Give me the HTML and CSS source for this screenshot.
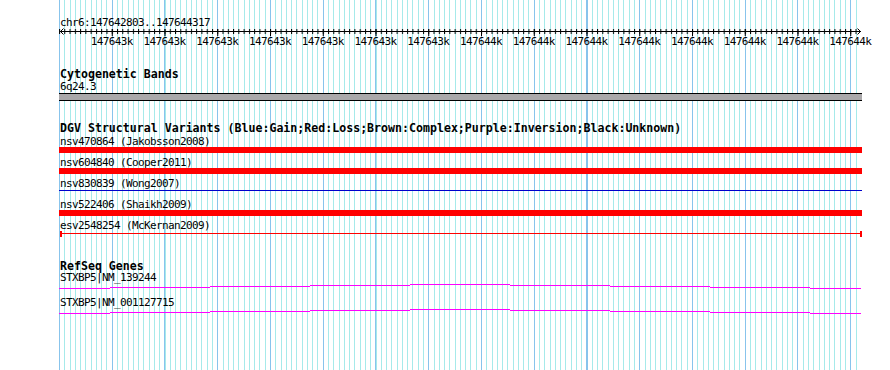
FILE: index.html
```html
<!DOCTYPE html>
<html lang="en">
<head>
    <meta charset="UTF-8">
    <title>chr6:147642803..147644317</title>
    <link rel="stylesheet" href="styles.css">
</head>
<body>
    <div class="panel">
        <div class="label locus">chr6:147642803..147644317</div>
        <svg class="ruler" width="803" height="8">
            <defs>
                <pattern id="minor-tick" width="5.275" height="8" patternUnits="userSpaceOnUse">
                    <rect x="0" y="1" width="1" height="5" fill="#000"/>
                </pattern>
                <pattern id="major-tick" width="52.75" height="8" patternUnits="userSpaceOnUse">
                    <rect x="0" y="1" width="1" height="7" fill="#000"/>
                </pattern>
            </defs>
            <rect x="0" y="0" width="799" height="8" fill="url(#minor-tick)"/>
            <rect x="52" y="0" width="747" height="8" fill="url(#major-tick)"/>
            <path d="M1 3.5H802 M4.5 0.5L1.5 3.5L4.5 6.5 M798.5 0.5L801.5 3.5L798.5 6.5" stroke="#000" fill="none"/>
        </svg>
        <div class="ticks">
            <span>147643k</span><span>147643k</span><span>147643k</span><span>147643k</span>
            <span>147643k</span><span>147643k</span><span>147643k</span><span>147644k</span>
            <span>147644k</span><span>147644k</span><span>147644k</span><span>147644k</span>
            <span>147644k</span><span>147644k</span><span>147644k</span>
        </div>

        <div class="track cyto">
            <div class="track-title">Cytogenetic Bands</div>
            <div class="label band-name">6q24.3</div>
            <div class="band"></div>
        </div>

        <div class="track dgv">
            <div class="track-title">DGV Structural Variants (Blue:Gain;Red:Loss;Brown:Complex;Purple:Inversion;Black:Unknown)</div>
            <div class="features">
                <div class="feature">
                    <div class="label">nsv470864 (Jakobsson2008)</div>
                    <div class="bar loss"></div>
                </div>
                <div class="feature">
                    <div class="label">nsv604840 (Cooper2011)</div>
                    <div class="bar loss"></div>
                </div>
                <div class="feature">
                    <div class="label">nsv830839 (Wong2007)</div>
                    <div class="thin gain"></div>
                </div>
                <div class="feature">
                    <div class="label">nsv522406 (Shaikh2009)</div>
                    <div class="bar loss"></div>
                </div>
                <div class="feature">
                    <div class="label">esv2548254 (McKernan2009)</div>
                    <div class="capped"></div>
                </div>
            </div>
        </div>

        <div class="track refseq">
            <div class="track-title">RefSeq Genes</div>
            <div class="gene">
                <div class="label">STXBP5|NM_139244</div>
                <svg class="hat" width="803" height="7">
                    <path d="M0 5.5H51 M51 4.5H151 M151 3.5H251 M251 2.5H351 M351 1.5H451 M451 2.5H551 M551 3.5H651 M651 4.5H751 M751 5.5H802"/>
                </svg>
            </div>
            <div class="gene">
                <div class="label">STXBP5|NM_001127715</div>
                <svg class="hat" width="803" height="7">
                    <path d="M0 5.5H51 M51 4.5H151 M151 3.5H251 M251 2.5H351 M351 1.5H451 M451 2.5H551 M551 3.5H651 M651 4.5H751 M751 5.5H802"/>
                </svg>
            </div>
        </div>
    </div>
</body>
</html>
```

FILE: styles.css
```css
body {
    margin: 0;
    background: #fff;
    color: #000;
    font-family: "DejaVu Sans Mono", monospace;
    overflow: hidden;
}
.panel {
    box-sizing: border-box;
    margin-left: 59px;
    width: 803px;
    height: 370px;
    padding-top: 17px;
    background-image:
        repeating-linear-gradient(to right, #88c4ec 0 1px, transparent 1px 52.75px),
        repeating-linear-gradient(to right, #a6eaea 0 1px, transparent 1px 5.275px);
    background-size: 799px 100%;
    background-repeat: no-repeat;
}
.label {
    height: 11px;
    padding-left: 1px;
    font-size: 11px;
    line-height: 11px;
    letter-spacing: -0.62px;
    white-space: nowrap;
}
.ruler {
    display: block;
}
.ticks {
    display: flex;
    height: 11px;
    margin-left: 26.375px;
    font-size: 11px;
    line-height: 11px;
    letter-spacing: -0.62px;
    white-space: nowrap;
}
.ticks span {
    flex: 0 0 52.75px;
    text-align: center;
}
.track-title {
    height: 12px;
    padding-left: 1px;
    font-size: 11.6px;
    font-weight: bold;
    line-height: 12px;
    white-space: nowrap;
}
.cyto {
    margin-top: 21px;
}
.band-name {
    margin-top: 1px;
}
.band {
    height: 6px;
    margin-top: 1px;
    background: #aaa8aa;
    border-top: 1px solid #000;
    border-bottom: 1px solid #000;
}
.dgv {
    margin-top: 21px;
}
.features {
    padding-top: 2px;
}
.feature {
    height: 21px;
}
.bar {
    height: 6px;
}
.loss {
    background: #ff0000;
}
.thin {
    height: 1px;
    margin-top: 1px;
}
.gain {
    background: #0000cc;
}
.capped {
    box-sizing: border-box;
    width: 802px;
    height: 6px;
    margin-left: 1px;
    border-left: 2px solid #ff0000;
    border-right: 2px solid #ff0000;
    background: linear-gradient(#ff0000, #ff0000) 0 2px / 100% 1px no-repeat;
}
.refseq {
    margin-top: 19px;
}
.gene {
    height: 25px;
}
.hat {
    display: block;
}
.hat path {
    fill: none;
    stroke: #ff00ff;
    stroke-width: 1;
}
```
